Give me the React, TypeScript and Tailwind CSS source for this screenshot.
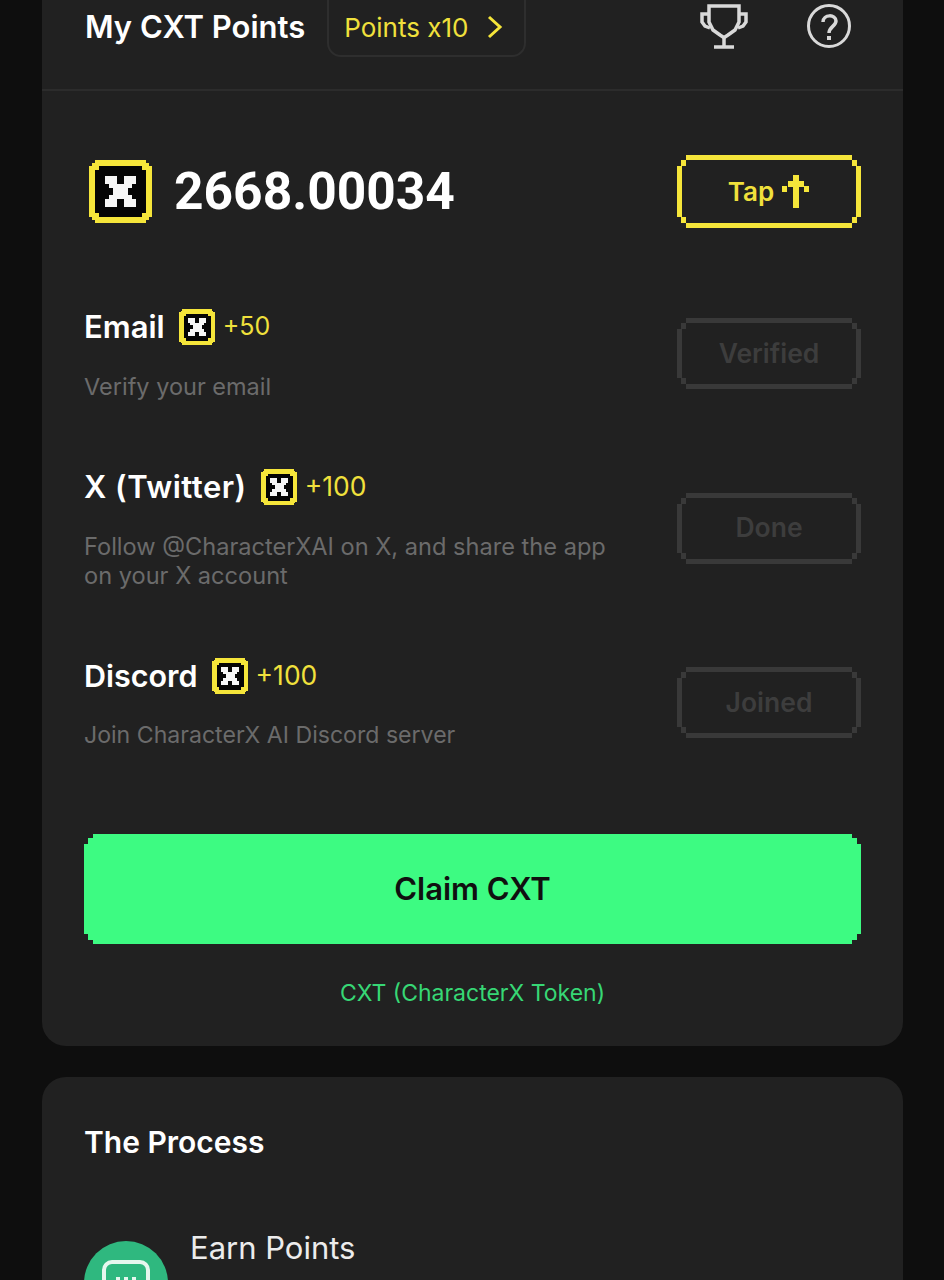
import React from "react";

const YELLOW = "#f5e53a";

function Coin({ size }: { size: number }) {
  const x = ["11100111", "11100111", "01111110", "00111100", "00111100", "01111110", "11100111", "11100111"];
  const inner = size < 50 ? "M12 8H52V12H56V52H52V56H12V52H8V12H12Z" : "M10 6H54V10H58V54H54V58H10V54H6V10H10Z";
  return (
    <svg width={size} height={size} viewBox="0 0 64 64" shapeRendering="crispEdges" className="shrink-0">
      <path fill={YELLOW} d="M6 0H58V3H61V6H64V58H61V61H58V64H6V61H3V58H0V6H3V3H6Z" />
      <path fill="#050505" d={inner} />
      {x.map((row, r) =>
        row.split("").map((c, i) =>
          c === "1" ? <rect key={`${r}-${i}`} x={16 + i * 4} y={16 + r * 4} width={4.1} height={4.1} fill="#f6f6f6" /> : null
        )
      )}
    </svg>
  );
}

function PixelFrame({ w, h, color, t = 4 }: { w: number; h: number; color: string; t?: number }) {
  return (
    <svg width={w} height={h} viewBox={`0 0 ${w} ${h}`} shapeRendering="crispEdges" className="absolute left-0 top-0">
      <g fill={color}>
        <rect x={9} y={0} width={w - 18} height={t + 1} />
        <rect x={9} y={h - t - 1} width={w - 18} height={t + 1} />
        <rect x={0} y={11} width={t + 1} height={h - 22} />
        <rect x={w - t - 1} y={11} width={t + 1} height={h - 22} />
        <rect x={4} y={5} width={5} height={6} />
        <rect x={w - 9} y={5} width={5} height={6} />
        <rect x={4} y={h - 11} width={5} height={6} />
        <rect x={w - 9} y={h - 11} width={5} height={6} />
      </g>
    </svg>
  );
}

function Disabled({ label }: { label: string }) {
  return (
    <div className="relative flex h-[71px] w-[184px] shrink-0 items-center justify-center text-[26.5px] font-semibold text-[#3d3d3d]">
      <PixelFrame w={184} h={71} color="#393939" />
      <span className="relative">{label}</span>
    </div>
  );
}

function Task({ title, points, desc, label, titleClass, pointsClass, descClass }: { title: string; points: string; desc: React.ReactNode; label: string; titleClass: string; pointsClass: string; descClass: string }) {
  return (
    <div className="flex items-center justify-between">
      <div>
        <div className="flex h-[40px] items-center">
          <span className={titleClass}>{title}</span>
          <span className="ml-[14px] mr-[8px]"><Coin size={36} /></span>
          <span className={pointsClass}>{points}</span>
        </div>
        <div className={descClass}>{desc}</div>
      </div>
      <Disabled label={label} />
    </div>
  );
}

export default function App() {
  return (
    <div className="h-[1280px] w-[944px] overflow-hidden bg-[#0e0e0e] px-[42px] font-['Inter','Noto_Sans',sans-serif]">
      <div className="w-[861px] rounded-b-[24px] bg-[#212121] pb-[38px]">
        <div className="flex h-[91px] items-start justify-between border-b-2 border-[#2c2c2c] pl-[43px] pr-[52px]">
          <div className="-mt-[3px] flex items-center">
            <span className="text-[31px] font-semibold leading-[60px] text-white">My CXT Points</span>
            <div className="ml-[22px] flex h-[60px] w-[199px] items-center rounded-b-[14px] border-2 border-[#2e2e2e] pl-[15px]">
              <span className="text-[26px] text-[#f0e03c]">Points x10</span>
              <svg width="16" height="24" viewBox="0 0 16 24" className="ml-[19px]" fill="none" stroke={YELLOW} strokeWidth="3">
                <path d="M2 2L13 12L2 22" />
              </svg>
            </div>
          </div>
          <div className="flex items-start gap-[59px] pt-[4px]">
            <svg width="48" height="45" viewBox="0 0 48 45" fill="none" stroke="#d9d9d9" strokeWidth="3.5">
              <path d="M9 2H39V18L35 26L28 31L25 33H23L20 31L13 26L9 18Z" />
              <path d="M9 10H2V18L5 22L10 24" />
              <path d="M39 10H46V18L43 22L38 24" />
              <path d="M24 33V43M14 43H34" />
            </svg>
            <svg width="44" height="44" viewBox="0 0 44 44" fill="none" stroke="#d9d9d9" strokeWidth="3">
              <circle cx="22" cy="22" r="20.5" />
              <path d="M16 18C16 10 29 10 29 17C29 22 22 23 22 29" strokeWidth="3.5" />
              <path d="M22 32V36" strokeWidth="4" />
            </svg>
          </div>
        </div>

        <div className="px-[42px]">
          <div className="mt-[64px] flex items-center justify-between">
            <div className="flex items-center">
              <span className="ml-[5px]"><Coin size={63} /></span>
              <span className="ml-[22px] font-['Roboto',sans-serif] text-[51.5px] font-bold leading-none text-white">2668.00034</span>
            </div>
            <div className="relative flex h-[73px] w-[184px] items-center justify-center text-[26px] font-semibold text-[#f0e03c]">
              <PixelFrame w={184} h={73} color={YELLOW} />
              <span className="relative">Tap</span>
              <svg width="28" height="33" viewBox="0 0 28 33" className="relative ml-[8px]" shapeRendering="crispEdges" fill={YELLOW}>
                <rect x="11" y="0" width="6" height="33" />
                <rect x="6" y="6" width="16" height="6" />
                <rect x="0" y="11" width="5" height="6" />
                <rect x="22" y="11" width="5" height="6" />
              </svg>
            </div>
          </div>

          <div className="mt-[79px] flex flex-col gap-[66.5px]">
            <Task
              title="Email"
              points="+50"
              desc="Verify your email"
              label="Verified"
              titleClass="text-[31px] font-semibold text-white"
              pointsClass="text-[25px] text-[#f0e03c]"
              descClass="mt-[24.5px] text-[23.5px] leading-[29px] text-[#6b6b6b]"
            />
            <Task
              title="X (Twitter)"
              points="+100"
              desc={<>Follow @CharacterXAI on X, and share the app<br />on your X account</>}
              label="Done"
              titleClass="text-[31px] font-semibold tracking-[0.5px] text-white"
              pointsClass="text-[26.5px] text-[#f0e03c]"
              descClass="mt-[24.5px] text-[23.6px] leading-[29px] text-[#6b6b6b]"
            />
            <Task
              title="Discord"
              points="+100"
              desc="Join CharacterX AI Discord server"
              label="Joined"
              titleClass="text-[30.5px] font-semibold text-white"
              pointsClass="text-[26.5px] text-[#f0e03c]"
              descClass="mt-[24.5px] text-[23.1px] leading-[29px] text-[#6b6b6b]"
            />
          </div>

          <div className="mt-[84.5px] flex h-[110px] items-center justify-center bg-[#3dfb82] text-[31px] font-semibold text-[#101010] [clip-path:polygon(9px_0,calc(100%-9px)_0,calc(100%-9px)_4px,calc(100%-4px)_4px,calc(100%-4px)_10px,100%_10px,100%_calc(100%-10px),calc(100%-4px)_calc(100%-10px),calc(100%-4px)_calc(100%-4px),calc(100%-9px)_calc(100%-4px),calc(100%-9px)_100%,9px_100%,9px_calc(100%-4px),4px_calc(100%-4px),4px_calc(100%-10px),0_calc(100%-10px),0_10px,4px_10px,4px_4px,9px_4px)]">
            Claim CXT
          </div>

          <div className="mt-[34px] text-center text-[23px] leading-[30px] text-[#37d775]">CXT (CharacterX Token)</div>
        </div>
      </div>

      <div className="mt-[31px] w-[861px] rounded-t-[24px] bg-[#212121] px-[42px] pt-[45px]">
        <div className="text-[30px] font-semibold leading-[40px] text-white">The Process</div>
        <div className="mt-[64px] flex items-start">
          <div className="mt-[15px] flex h-[84px] w-[84px] shrink-0 items-start justify-center rounded-full bg-[#2fb87f] pt-[19px]">
            <div className="flex h-[48px] w-[48px] justify-center gap-[4px] rounded-[10px] border-[4px] border-[#e6f7ee] pt-[13px]">
              <span className="h-[4px] w-[4px] bg-[#e6f7ee]" />
              <span className="h-[4px] w-[4px] bg-[#e6f7ee]" />
              <span className="h-[4px] w-[4px] bg-[#e6f7ee]" />
            </div>
          </div>
          <div className="ml-[22px] text-[31px] leading-[44px] text-[#ececec]">Earn Points</div>
        </div>
      </div>
    </div>
  );
}
